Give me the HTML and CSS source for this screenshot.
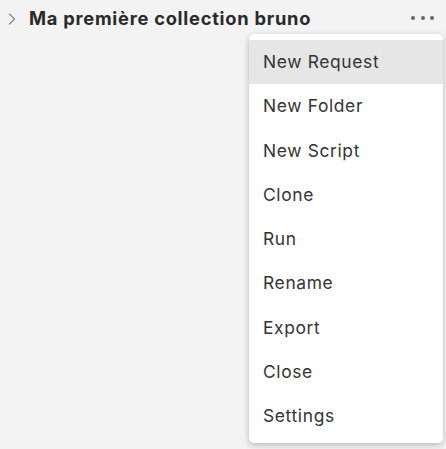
FILE: index.html
```html
<!DOCTYPE html>
<html>
<head>
<meta charset="utf-8">
<link rel="stylesheet" href="styles.css">
</head>
<body>
<div class="sidebar">
  <div class="collection-row">
    <svg class="chevron" width="8" height="12" viewBox="0 0 8 12"><path d="M1.5 1 L6.5 6 L1.5 11" fill="none" stroke="#8a8a8a" stroke-width="1.4" stroke-linecap="round" stroke-linejoin="round"/></svg>
    <span class="collection-name">Ma première collection bruno</span>
    <span class="dots"><i></i><i></i><i></i></span>
  </div>
  <div class="menu-wrap">
    <ul class="menu">
      <li class="item active">New Request</li>
      <li class="item">New Folder</li>
      <li class="item">New Script</li>
      <li class="item">Clone</li>
      <li class="item">Run</li>
      <li class="item">Rename</li>
      <li class="item">Export</li>
      <li class="item">Close</li>
      <li class="item">Settings</li>
    </ul>
  </div>
</div>
</body>
</html>
```

FILE: styles.css
```css
html, body {
  margin: 0;
  padding: 0;
  background: #f3f3f3;
  font-family: Inter, "Noto Sans", sans-serif;
  color: #343434;
}
.sidebar {
  width: 446px;
  height: 449px;
  position: relative;
}
.collection-row {
  display: flex;
  align-items: center;
  height: 36px;
  padding-left: 8px;
  padding-right: 12px;
}
.chevron {
  flex: none;
  margin-right: 13px;
  margin-top: 1px;
}
.collection-name {
  font-size: 18.3px;
  font-weight: 700;
  color: #2a2a2a;
  flex: 1;
  letter-spacing: 0.75px;
}
.dots {
  display: flex;
  gap: 5.5px;
}
.dots i {
  width: 4px;
  height: 4px;
  border-radius: 50%;
  background: #666;
}
.menu-wrap {
  display: flex;
  justify-content: flex-end;
  padding-right: 3px;
  margin-top: -2px;
}
.menu {
  list-style: none;
  margin: 0;
  padding: 6px 0 5px;
  width: 194px;
  background: #fff;
  border-radius: 5px;
  box-shadow: 0 2px 6px rgba(0,0,0,0.25);
}
.item {
  height: 44.25px;
  line-height: 44.25px;
  padding-left: 14px;
  font-size: 17.4px;
  letter-spacing: 0.65px;
  color: #343434;
}
.item.active {
  background: #e6e6e6;
}
```
